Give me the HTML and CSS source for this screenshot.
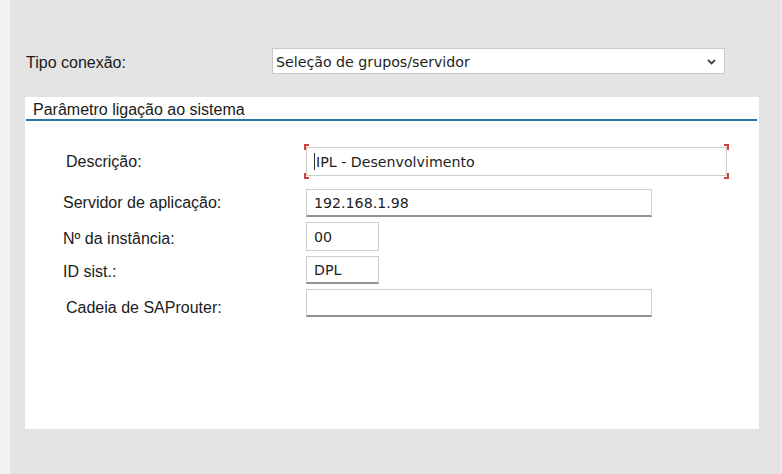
FILE: index.html
```html
<!DOCTYPE html>
<html lang="pt">
<head>
<meta charset="utf-8">
<title>Parâmetro ligação ao sistema</title>
<link rel="stylesheet" href="styles.css">
</head>
<body>
<div class="app">
  <div class="strip"></div>
  <div class="main">
    <div class="conn-row">
      <span class="conn-label">Tipo conexão:</span>
      <div class="select">
        <span class="select-text">Seleção de grupos/servidor</span>
        <svg class="chev" width="9" height="6" viewBox="0 0 9 6"><path d="M1 1 L4.5 4.5 L8 1" fill="none" stroke="#444" stroke-width="1.8"/></svg>
      </div>
    </div>
    <div class="panel">
      <div class="panel-head">Parâmetro ligação ao sistema</div>
      <div class="form">
        <div class="row row-desc">
          <span class="lbl lbl-in">Descrição:</span>
          <div class="fld fld-desc focus">
            <span class="caret"></span>IPL - Desenvolvimento
            <span class="br br-tl"></span><span class="br br-bl"></span>
            <span class="br br-tr"></span><span class="br br-br"></span>
          </div>
        </div>
        <div class="row row-srv">
          <span class="lbl">Servidor de aplicação:</span>
          <div class="fld fld-wide h28">192.168.1.98</div>
        </div>
        <div class="row">
          <span class="lbl low2">Nº da instância:</span>
          <div class="fld fld-small h29 light">00</div>
        </div>
        <div class="row">
          <span class="lbl low2">ID sist.:</span>
          <div class="fld fld-small h28">DPL</div>
        </div>
        <div class="row">
          <span class="lbl lbl-in low5">Cadeia de SAProuter:</span>
          <div class="fld fld-wide h28"></div>
        </div>
      </div>
    </div>
  </div>
</div>
</body>
</html>
```
FILE: styles.css
```css
html, body {
  margin: 0;
  padding: 0;
}
body {
  width: 782px;
  height: 474px;
  overflow: hidden;
  background: #e4e4e4;
  font-family: "Liberation Sans", Arial, sans-serif;
  color: #1b1b1b;
}
.app {
  display: flex;
  height: 474px;
}
.strip {
  width: 10px;
  background: #f2f2f2;
}
.main {
  flex: 1;
  padding: 48px 22px 0 15px;
  border-right: 1px solid #f0f0f0;
}
.conn-row {
  display: flex;
  align-items: center;
  height: 26px;
}
.conn-label {
  width: 246px;
  padding-left: 1px;
  padding-top: 3px;
  font-size: 16px;
}
.select {
  width: 453px;
  height: 26px;
  box-sizing: border-box;
  border: 1px solid #cacaca;
  background: #fff;
  display: flex;
  align-items: center;
  justify-content: space-between;
  padding: 1px 8px 0 3px;
}
.select-text, .fld {
  font-family: "DejaVu Sans", Tahoma, sans-serif;
  font-size: 14.2px;
  color: #1e1e1e;
}
.panel {
  margin-top: 23px;
  width: 734px;
  height: 332px;
  background: #fff;
}
.panel-head {
  margin: 0 2px 0 1px;
  height: 19px;
  padding-top: 3px;
  line-height: 20px;
  padding-left: 7px;
  border-bottom: 2px solid #2a74a6;
  font-size: 16px;
}
.form {
  padding-top: 26px;
  display: flex;
  flex-direction: column;
  gap: 5px;
}
.row {
  display: flex;
  align-items: center;
}
.row-srv {
  margin-top: 8px;
}
.lbl {
  width: 243px;
  padding-left: 38px;
  box-sizing: content-box;
  font-size: 16px;
}
.lbl-in {
  width: 240px;
  padding-left: 41px;
}
.low2 { padding-top: 4px; }
.low5 { padding-top: 9px; }
.fld {
  position: relative;
  box-sizing: border-box;
  background: #fff;
  border: 1px solid #cdcdcd;
  border-bottom: 2px solid #8d9398;
  padding-left: 7px;
  display: flex;
  align-items: center;
}
.fld-desc {
  width: 421px;
  height: 29px;
  border-bottom: 1px solid #cdcdcd;
}
.fld-wide {
  width: 346px;
}
.fld-small {
  width: 73px;
}
.h28 { height: 28px; }
.h29 { height: 29px; }
.light { border-bottom: 1px solid #cdcdcd; }
.caret {
  width: 1px;
  height: 17px;
  background: #333;
  margin-right: 1px;
}
.br {
  position: absolute;
  width: 3px;
  height: 4px;
  border-color: #d0403a;
  border-style: solid;
  border-width: 0;
}
.br-tl { left: -3px; top: -4px; border-left-width: 2px; border-top-width: 2px; }
.br-bl { left: -3px; bottom: -4px; border-left-width: 2px; border-bottom-width: 2px; }
.br-tr { right: -3px; top: -4px; border-right-width: 2px; border-top-width: 2px; }
.br-br { right: -3px; bottom: -4px; border-right-width: 2px; border-bottom-width: 2px; }
```
